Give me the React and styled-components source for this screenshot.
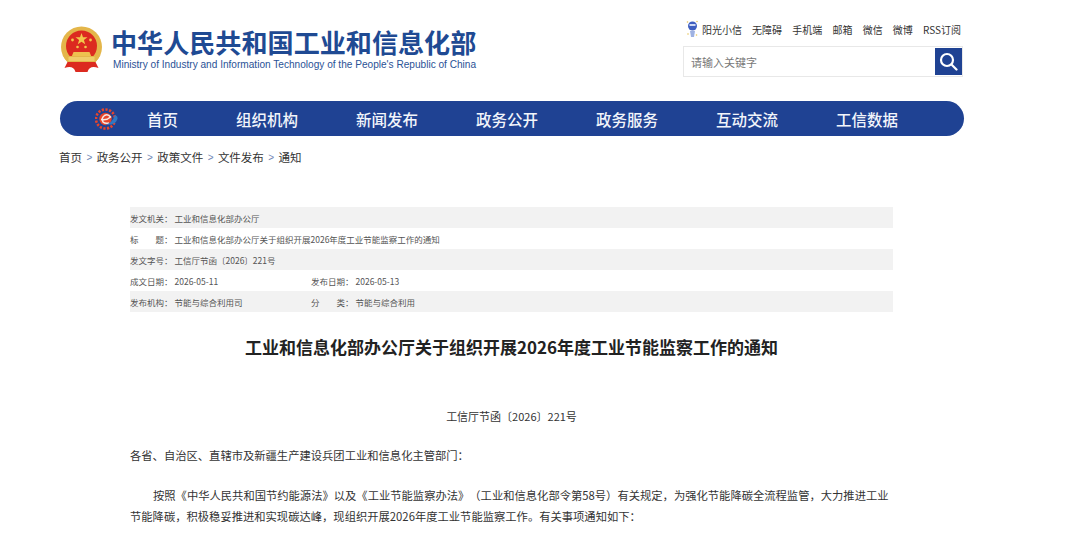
import React from "react";
import styled, { createGlobalStyle } from "styled-components";

const GlobalStyle = createGlobalStyle`
  html, body { margin: 0; padding: 0; background: #fff; overflow: hidden; }
  body {
    font-family: "Liberation Sans", "Noto Sans CJK SC", sans-serif;
    text-spacing-trim: space-all;
  }
`;

const CJK = `"Noto Sans CJK SC", sans-serif`;

const Page = styled.div`
  width: 1080px;
  height: 543px;
  overflow: hidden;
  padding-left: 60px;
  box-sizing: border-box;
`;

const Header = styled.header`
  width: 904px;
  height: 101px;
  display: flex;
  justify-content: space-between;
`;

const Brand = styled.div`
  display: flex;
  gap: 8px;
  padding-top: 26px;
  height: 46px;
`;

const BrandText = styled.div`
  display: flex;
  flex-direction: column;
`;

const BrandTitle = styled.div`
  font-family: ${CJK};
  font-size: 26.1px;
  line-height: 32px;
  height: 32px;
  font-weight: 700;
  color: #1f4a93;
  white-space: nowrap;
`;

const BrandSub = styled.div`
  font-family: "Liberation Sans", sans-serif;
  font-size: 10.1px;
  line-height: 13px;
  padding-left: 2px;
  color: #2a5296;
  white-space: nowrap;
`;

const HeadRight = styled.div`
  width: 280px;
  margin-right: 1px;
  padding-top: 21px;
  display: flex;
  flex-direction: column;
`;

const TopLinks = styled.div`
  display: flex;
  justify-content: flex-end;
  align-items: center;
  gap: 10.2px;
  height: 17px;
  margin-right: 2px;
  font-family: ${CJK};
  font-size: 10px;
  color: #333;
  white-space: nowrap;
`;

const SunLink = styled.span`
  display: flex;
  align-items: center;
  gap: 3px;
`;

const Search = styled.div`
  margin-top: 8px;
  height: 29px;
  border: 1px solid #e8e8e8;
  display: flex;
  align-items: center;
  justify-content: space-between;
  box-sizing: content-box;
`;

const SearchHint = styled.span`
  font-family: ${CJK};
  font-size: 11px;
  color: #777;
  padding-left: 7px;
`;

const SearchBtn = styled.div`
  width: 27px;
  height: 27px;
  background: #1f4293;
  display: flex;
  align-items: center;
  justify-content: center;
`;

const Nav = styled.nav`
  width: 904px;
  height: 35px;
  border-radius: 18px;
  background: #1f4293;
  display: flex;
  align-items: center;
  padding-left: 35px;
  box-sizing: border-box;
`;

const NavItems = styled.div`
  display: flex;
  gap: 58px;
  margin-left: 29px;
`;

const NavItem = styled.a`
  font-family: ${CJK};
  font-size: 15.5px;
  font-weight: 500;
  color: #f2f5fb;
  white-space: nowrap;
`;

const Crumbs = styled.div`
  display: flex;
  align-items: center;
  height: 20px;
  margin-top: 11px;
  margin-left: -1px;
  font-family: ${CJK};
  font-size: 11.5px;
  color: #333;
`;

const CrumbSep = styled.span`
  font-family: "Liberation Sans", sans-serif;
  font-size: 10px;
  color: #6f86b5;
  margin: 0 4.4px;
`;

const Article = styled.article`
  width: 763px;
  margin: 40px 0 0 70px;
`;

const Meta = styled.div`
  display: flex;
  flex-direction: column;
`;

const MetaRow = styled.div`
  height: 21px;
  display: flex;
  align-items: center;
  background: ${(p) => (p.$shade ? "#f2f2f2" : "transparent")};
  font-family: ${CJK};
  font-size: 8.5px;
  color: #555;
  white-space: nowrap;
`;

const MetaCell = styled.span`
  display: flex;
  width: ${(p) => (p.$half ? "181px" : "auto")};
`;

const MetaLabel = styled.span`
  width: 44.5px;
  flex: none;
`;

const Title = styled.h1`
  margin: 23px 0 0;
  font-family: ${CJK};
  font-size: 17px;
  line-height: 24px;
  font-weight: 700;
  color: #222;
  text-align: center;
`;

const DocNo = styled.p`
  margin: 47px 0 0;
  font-family: ${CJK};
  font-size: 11px;
  line-height: 20px;
  color: #333;
  text-align: center;
`;

const Para = styled.p`
  margin: ${(p) => p.$gap}px 0 0;
  font-family: ${CJK};
  font-size: 11.3px;
  line-height: 21px;
  color: #333;
  text-indent: ${(p) => (p.$indent ? "23px" : "0")};
`;

function Emblem() {
  return (
    <svg width="43" height="46" viewBox="1 -1 42 46">
      <circle cx="22" cy="20" r="20.5" fill="#e4b64a" />
      <circle cx="22" cy="19" r="15.5" fill="#dc2a20" />
      <polygon points="22,6 23.5,10.2 28,10.3 24.4,13 25.7,17.3 22,14.8 18.3,17.3 19.6,13 16,10.3 20.5,10.2" fill="#f2c84b" />
      <circle cx="13" cy="13" r="1.4" fill="#f2c84b" />
      <circle cx="31" cy="13" r="1.4" fill="#f2c84b" />
      <circle cx="18" cy="20" r="1.3" fill="#f2c84b" />
      <circle cx="26" cy="20" r="1.3" fill="#f2c84b" />
      <path d="M12 30 L14 25 L30 25 L32 30 Z" fill="#eec14f" />
      <path d="M3 28 Q8 38 15 38 L29 38 Q36 38 41 28 L36 29 L8 29 Z" fill="#e4b64a" />
      <rect x="9" y="30" width="26" height="4" fill="#f0cd6a" />
      <path d="M8 35 L36 35 L39 41 Q30 38 28 45 L16 45 Q14 38 5 41 Z" fill="#dc2a20" />
    </svg>
  );
}

function SunIcon() {
  return (
    <svg width="13" height="19" viewBox="0 0 13 19">
      <circle cx="6.5" cy="6" r="4.5" fill="#3f5fc0" />
      <rect x="3.5" y="4" width="6" height="2" fill="#cfd9f3" />
      <path d="M4 11 L9 11 L8 17 L5 17 Z" fill="#9fb2e2" />
      <circle cx="1.5" cy="2" r="0.8" fill="#e6c45a" />
      <circle cx="11" cy="1.5" r="0.8" fill="#e6c45a" />
      <circle cx="2" cy="14" r="0.8" fill="#e6c45a" />
      <circle cx="10.5" cy="15" r="0.8" fill="#e6c45a" />
    </svg>
  );
}

function NavLogo() {
  return (
    <svg width="23" height="24" viewBox="0 0 23 24">
      <circle cx="10.5" cy="12" r="9.5" fill="none" stroke="#e8452a" strokeWidth="2.6" strokeDasharray="2.2 1.5" />
      <circle cx="10.5" cy="12" r="6.2" fill="#e8452a" />
      <path d="M6 12.5 Q12 13.5 15.5 10 Q13 6.5 9.5 8.5 Q6 11 8 15 Q10 17 14 16" fill="none" stroke="#f7e9e4" strokeWidth="1.5" />
      <path d="M10 17.5 Q17 17 20 8 Q23 9 22.5 12 Q20 19 10 17.5 Z" fill="#2e78c4" />
    </svg>
  );
}

function SearchIcon() {
  return (
    <svg width="19" height="19" viewBox="0 0 19 19" fill="none" stroke="#fff" strokeWidth="2.2">
      <circle cx="8" cy="8" r="6" />
      <path d="M12.5 12.5 L17.5 17.5" strokeLinecap="round" />
    </svg>
  );
}

const navLinks = ["首页", "组织机构", "新闻发布", "政务公开", "政务服务", "互动交流", "工信数据"];
const crumbs = ["首页", "政务公开", "政策文件", "文件发布", "通知"];
const topLinks = ["无障碍", "手机端", "邮箱", "微信", "微博", "RSS订阅"];

export default function App() {
  return (
    <Page>
      <GlobalStyle />
      <Header>
        <Brand>
          <Emblem />
          <BrandText>
            <BrandTitle>中华人民共和国工业和信息化部</BrandTitle>
            <BrandSub>Ministry of Industry and Information Technology of the People's Republic of China</BrandSub>
          </BrandText>
        </Brand>
        <HeadRight>
          <TopLinks>
            <SunLink><SunIcon />阳光小信</SunLink>
            {topLinks.map((t) => <span key={t}>{t}</span>)}
          </TopLinks>
          <Search>
            <SearchHint>请输入关键字</SearchHint>
            <SearchBtn><SearchIcon /></SearchBtn>
          </Search>
        </HeadRight>
      </Header>
      <Nav>
        <NavLogo />
        <NavItems>
          {navLinks.map((t) => <NavItem key={t}>{t}</NavItem>)}
        </NavItems>
      </Nav>
      <Crumbs>
        {crumbs.map((t, i) => (
          <React.Fragment key={t}>
            {i > 0 && <CrumbSep>&gt;</CrumbSep>}
            <span>{t}</span>
          </React.Fragment>
        ))}
      </Crumbs>
      <Article>
        <Meta>
          <MetaRow $shade><MetaCell><MetaLabel>发文机关：</MetaLabel>工业和信息化部办公厅</MetaCell></MetaRow>
          <MetaRow><MetaCell><MetaLabel>标　　题：</MetaLabel>工业和信息化部办公厅关于组织开展2026年度工业节能监察工作的通知</MetaCell></MetaRow>
          <MetaRow $shade><MetaCell><MetaLabel>发文字号：</MetaLabel>工信厅节函〔2026〕221号</MetaCell></MetaRow>
          <MetaRow><MetaCell $half><MetaLabel>成文日期：</MetaLabel>2026-05-11</MetaCell><MetaCell><MetaLabel>发布日期：</MetaLabel>2026-05-13</MetaCell></MetaRow>
          <MetaRow $shade><MetaCell $half><MetaLabel>发布机构：</MetaLabel>节能与综合利用司</MetaCell><MetaCell><MetaLabel>分　　类：</MetaLabel>节能与综合利用</MetaCell></MetaRow>
        </Meta>
        <Title>工业和信息化部办公厅关于组织开展2026年度工业节能监察工作的通知</Title>
        <DocNo>工信厅节函〔2026〕221号</DocNo>
        <Para $gap={19}>各省、自治区、直辖市及新疆生产建设兵团工业和信息化主管部门：</Para>
        <Para $gap={19} $indent>按照《中华人民共和国节约能源法》以及《工业节能监察办法》（工业和信息化部令第58号）有关规定，为强化节能降碳全流程监管，大力推进工业节能降碳，积极稳妥推进和实现碳达峰，现组织开展2026年度工业节能监察工作。有关事项通知如下：</Para>
      </Article>
    </Page>
  );
}
